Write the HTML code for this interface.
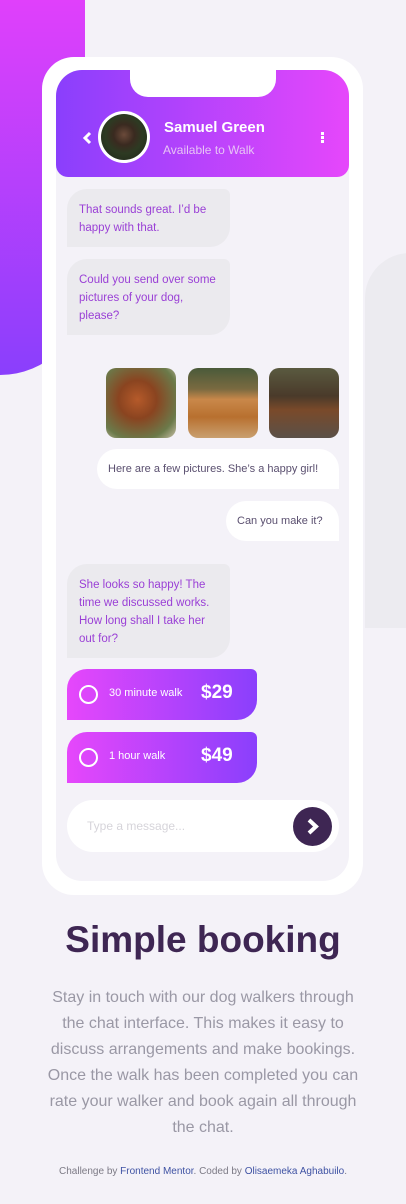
<!DOCTYPE html><html><head><style>
*{margin:0;padding:0;box-sizing:border-box}
body{width:406px;height:1204px;background:#f4f2f8;font-family:"Liberation Sans",sans-serif;position:relative;overflow:hidden}
.a{position:absolute}
.bl{left:0;top:0;width:85px;height:375px;background:linear-gradient(#e040fb,#8a3ffc);border-radius:0 0 85px 0}
.gr{left:365px;top:253px;width:60px;height:375px;background:#ecebf0;border-radius:45px 0 0 0}
.ph{left:42px;top:57px;width:321px;height:838px;background:#fff;border-radius:32px}
.sc{left:56px;top:70px;width:293px;height:811px;background:#f4f2f8;border-radius:26px;overflow:hidden}
.hd{left:0;top:0;width:293px;height:107px;background:linear-gradient(90deg,#8a3ffc,#e647fb);border-radius:0 0 12px 12px}
.notch{left:74px;top:0;width:146px;height:27px;background:#fff;border-radius:0 0 18px 18px}
.rc{background:#ebeaee;color:#9a40d6;font-size:11.5px;line-height:18px;padding:12px 12px;border-radius:20px 6px 20px 0}
.sn{background:#fff;color:#5a4f6f;font-size:11px;line-height:18px;padding:11px 11px;border-radius:20px 20px 0 20px}
.dog{width:70px;height:70px;border-radius:10px}
.op{left:11px;width:190px;height:51px;background:linear-gradient(90deg,#e647fb,#8a3ffc);border-radius:20px 6px 20px 0;color:#fff}
.op .c{position:absolute;left:12px;top:16px;width:19px;height:19px;border:2.5px solid #fff;border-radius:50%}
.op .t{position:absolute;left:42px;top:18px;font-size:11px}
.op .p{position:absolute;left:134px;top:13px;font-size:19px;font-weight:bold}
</style></head><body>
<div class="a bl"></div><div class="a gr"></div>
<div class="a ph"></div>
<div class="a sc" style="left:56px;top:70px">
<div class="a hd"></div><div class="a notch"></div>
<svg class="a" style="left:26px;top:61px" width="10" height="14"><path d="M8 2L3 7l5 5" stroke="#fff" stroke-width="3" fill="none"/></svg>
<div class="a" style="left:42px;top:41px;width:52px;height:52px;border-radius:50%;background:#fff"></div>
<div class="a" style="left:45px;top:44px;width:46px;height:46px;border-radius:50%;background:radial-gradient(circle at 50% 45%,#6b4a3a 0,#3a2a20 30%,#2d3a22 55%,#1e2418 100%)"></div>
<div class="a" style="left:108px;top:49px;color:#fff;font-weight:bold;font-size:15px">Samuel Green</div>
<div class="a" style="left:107px;top:73px;color:#e7c3f5;font-size:12px">Available to Walk</div>
<div class="a" style="left:265px;top:62px;width:3px;height:11px;background:repeating-linear-gradient(#fff 0 3px,transparent 3px 4px)"></div>
<div class="a rc" style="left:11px;top:119px;width:163px;height:58px">That sounds great. I’d be happy with that.</div>
<div class="a rc" style="left:11px;top:189px;width:163px;height:76px">Could you send over some pictures of your dog, please?</div>
<div class="a dog" style="left:50px;top:298px;background:radial-gradient(circle at 45% 45%,#b55a2a 0,#8a4420 35%,#6b7a4a 75%,#c9c0a8 100%)"></div>
<div class="a dog" style="left:132px;top:298px;background:linear-gradient(#4a5a3a 0,#7a6a40 30%,#c9884a 45%,#b8702f 70%,#c9a070 100%)"></div>
<div class="a dog" style="left:213px;top:298px;background:linear-gradient(#5a5a40,#4a3a2a 40%,#7a4a2a 60%,#5a5048 100%)"></div>
<div class="a sn" style="left:41px;top:379px;width:242px;height:40px">Here are a few pictures. She’s a happy girl!</div>
<div class="a sn" style="left:170px;top:431px;width:113px;height:40px">Can you make it?</div>
<div class="a rc" style="left:11px;top:494px;width:163px;height:94px">She looks so happy! The time we discussed works. How long shall I take her out for?</div>
<div class="a op" style="top:599px"><div class="c"></div><div class="t">30 minute walk</div><div class="p">$29</div></div>
<div class="a op" style="top:662px"><div class="c"></div><div class="t">1 hour walk</div><div class="p">$49</div></div>
<div class="a" style="left:11px;top:730px;width:272px;height:52px;background:#fff;border-radius:26px"></div>
<div class="a" style="left:31px;top:749px;color:#d6d4da;font-size:12px">Type a message...</div>
<div class="a" style="left:237px;top:737px;width:39px;height:39px;border-radius:50%;background:#3e2653"></div>
<svg class="a" style="left:250px;top:747px" width="14" height="19"><path d="M3 3l7 6.5L3 16" stroke="#fff" stroke-width="4" fill="none"/></svg>
</div>
<div class="a" style="left:0;top:919px;width:406px;text-align:center;color:#3e2653;font-size:37px;font-weight:bold">Simple booking</div>
<div class="a" style="left:45px;top:985px;width:316px;text-align:center;color:#9a98a5;font-size:16px;line-height:26px">Stay in touch with our dog walkers through the chat interface. This makes it easy to discuss arrangements and make bookings. Once the walk has been completed you can rate your walker and book again all through the chat.</div>
<div class="a" style="left:0;top:1166px;width:406px;text-align:center;color:#7c7a85;font-size:10px">Challenge by <span style="color:#3e52a3">Frontend Mentor</span>. Coded by <span style="color:#3e52a3">Olisaemeka Aghabuilo</span>.</div>
</body></html>
